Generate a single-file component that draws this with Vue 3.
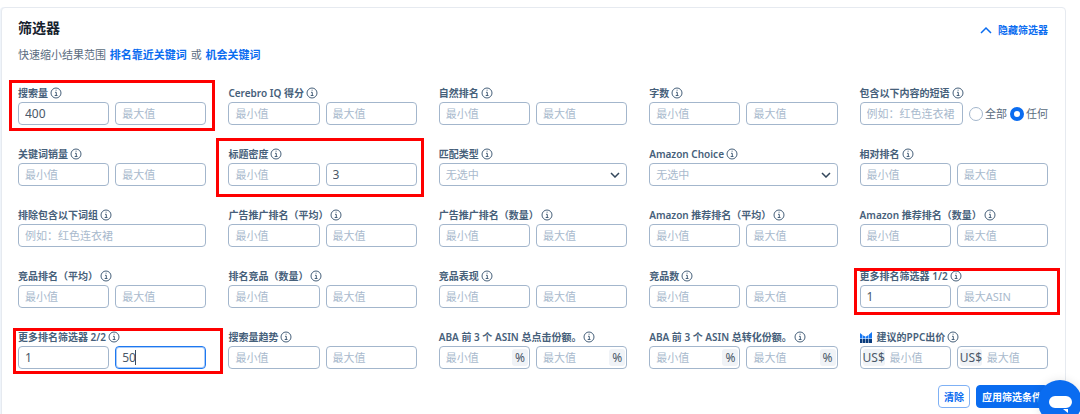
<template>
  <main class="panel">
    <header class="panel-head">
      <div>
        <h1 class="title">筛选器</h1>
        <p class="subtitle">
          快速缩小结果范围
          <a href="#" class="link">排名靠近关键词</a>
          或
          <a href="#" class="link">机会关键词</a>
        </p>
      </div>
      <button type="button" class="toggle">
        <svg viewBox="0 0 12 8" class="toggle-icon"><path d="M1 7 6 2l5 5" /></svg>
        隐藏筛选器
      </button>
    </header>

    <form class="filters" @submit.prevent>
      <div v-for="field in fields" :key="field.id" class="field" role="group" :aria-labelledby="field.id">
        <label :id="field.id" :for="field.id + '-min'" class="label">
          <svg v-if="field.chart" viewBox="0 0 12 11" class="chart-icon">
            <path class="chart-top" d="M0 1l2.5 2v3.5H0zM3 3.5l2.5 1v2H3zM6 4.5l2.5-1.5v3.5H6zM9 2.5L12 0v6.5H9z" />
            <path class="chart-base" d="M0 7h2.5v4H0zM3 7h2.5v4H3zM6 7h2.5v4H6zM9 7h3v4H9z" />
          </svg>
          <span>{{ field.label }}</span>
          <svg viewBox="0 0 12 12" class="info">
            <circle cx="6" cy="6" r="5" />
            <path d="M5 5.3h1.3v3M4.7 8.5h2.8" />
            <path d="M5.6 3.2h1" />
          </svg>
        </label>

        <div v-if="field.type === 'select'" class="controls">
          <div class="select-wrap">
            <select :id="field.id + '-min'" class="box">
              <option>无选中</option>
            </select>
            <svg viewBox="0 0 10 6" class="arrow"><path d="M1 1l4 4 4-4" /></svg>
          </div>
        </div>

        <div v-else-if="field.type === 'text'" class="controls">
          <input :id="field.id + '-min'" type="text" class="box" placeholder="例如：红色连衣裙">
          <div v-if="field.radios" class="radios">
            <label class="radio"><input v-model="match" type="radio" name="match" value="all">全部</label>
            <label class="radio"><input v-model="match" type="radio" name="match" value="any">任何</label>
          </div>
        </div>

        <div v-else class="controls">
          <div class="box-wrap" :class="{ prefixed: field.prefix }">
            <span v-if="field.prefix" class="prefix">{{ field.prefix }}</span>
            <input :id="field.id + '-min'" v-model="field.min" type="text" class="box" placeholder="最小值">
            <span v-if="field.suffix" class="suffix">{{ field.suffix }}</span>
          </div>
          <div class="box-wrap" :class="{ prefixed: field.prefix }">
            <span v-if="field.prefix" class="prefix">{{ field.prefix }}</span>
            <input
              v-model="field.max"
              type="text"
              class="box"
              :class="{ active: field.active }"
              :aria-label="field.label + ' 最大值'"
              :placeholder="field.maxHint || '最大值'"
            >
            <span v-if="field.suffix" class="suffix">{{ field.suffix }}</span>
            <span v-if="field.active" class="caret"></span>
          </div>
        </div>

        <div v-if="field.mark" class="mark" :class="field.mark"></div>
      </div>
    </form>

    <footer class="actions">
      <button type="button" class="btn btn-outline">清除</button>
      <button type="button" class="btn btn-primary">应用筛选条件</button>
    </footer>

    <button type="button" class="chat" aria-label="chat">
      <svg viewBox="0 0 44 44">
        <path d="M17 16h11a6 6 0 0 1 0 12H17a6 6 0 0 1 0-12zM25 29h5v4z" />
      </svg>
    </button>
  </main>
</template>

<script setup>
  import { reactive, ref } from 'vue';

  const match = ref('any');

  const fields = reactive([
    { id: 'volume', label: '搜索量', min: '400', max: '', mark: 'mark-volume' },
    { id: 'cerebro', label: 'Cerebro IQ 得分', min: '', max: '' },
    { id: 'organic', label: '自然排名', min: '', max: '' },
    { id: 'words', label: '字数', min: '', max: '' },
    { id: 'include', label: '包含以下内容的短语', type: 'text', radios: true },
    { id: 'sales', label: '关键词销量', min: '', max: '' },
    { id: 'density', label: '标题密度', min: '', max: '3', mark: 'mark-density' },
    { id: 'match-type', label: '匹配类型', type: 'select' },
    { id: 'choice', label: 'Amazon Choice', type: 'select' },
    { id: 'relative', label: '相对排名', min: '', max: '' },
    { id: 'exclude', label: '排除包含以下词组', type: 'text' },
    { id: 'ad-avg', label: '广告推广排名（平均）', min: '', max: '' },
    { id: 'ad-count', label: '广告推广排名（数量）', min: '', max: '' },
    { id: 'rec-avg', label: 'Amazon 推荐排名（平均）', min: '', max: '' },
    { id: 'rec-count', label: 'Amazon 推荐排名（数量）', min: '', max: '' },
    { id: 'comp-avg', label: '竞品排名（平均）', min: '', max: '' },
    { id: 'comp-count', label: '排名竞品（数量）', min: '', max: '' },
    { id: 'comp-perf', label: '竞品表现', min: '', max: '' },
    { id: 'comp-total', label: '竞品数', min: '', max: '' },
    { id: 'more-1', label: '更多排名筛选器 1/2', min: '1', max: '', maxHint: '最大ASIN', mark: 'mark-more-1' },
    { id: 'more-2', label: '更多排名筛选器 2/2', min: '1', max: '50', active: true, mark: 'mark-more-2' },
    { id: 'trend', label: '搜索量趋势', min: '', max: '' },
    { id: 'click', label: 'ABA 前 3 个 ASIN 总点击份额。', min: '', max: '', suffix: '%' },
    { id: 'conversion', label: 'ABA 前 3 个 ASIN 总转化份额。', min: '', max: '', suffix: '%' },
    { id: 'ppc', label: '建议的PPC出价', min: '', max: '', prefix: 'US$', chart: true }
  ]);
</script>

<style>
  body {
    background: #fff;
    overflow: hidden;
  }
</style>

<style scoped>
  .panel {
    box-sizing: border-box;
    min-height: 100vh;
    margin: 7px 14px 0 1px;
    padding: 11px 17px 0 16px;
    border: 1px solid #e6eaf0;
    border-radius: 4px;
    background: #fff;
    color: #5a6c80;
    font-family: "Noto Sans", "Noto Sans CJK SC", sans-serif;
    font-size: 11px;
    line-height: 16px;
    box-shadow: -1px 0 0 #eff4fa;
  }

  button,
  input,
  select {
    font: inherit;
  }

  .panel-head {
    display: flex;
    justify-content: space-between;
    align-items: flex-start;
  }

  .title {
    margin: 0;
    color: #17222e;
    font-size: 14px;
    font-weight: 700;
    line-height: 18px;
  }

  .subtitle {
    margin: 10px 0 0;
    word-break: keep-all;
  }

  .link {
    margin: 0 1px;
    color: #0a6cf0;
    font-weight: 700;
    text-decoration: none;
  }

  .toggle {
    display: flex;
    align-items: center;
    gap: 6px;
    margin-top: 3px;
    padding: 0;
    border: 0;
    background: none;
    color: #0a6cf0;
    font-size: 10px;
    font-weight: 700;
    cursor: pointer;
  }

  .toggle-icon {
    width: 12px;
    height: 8px;
    fill: none;
    stroke: #0a6cf0;
    stroke-width: 1.5;
  }

  .filters {
    display: grid;
    grid-template-columns: repeat(5, minmax(0, 1fr));
    gap: 21px 22px;
    margin-top: 22px;
  }

  .field {
    position: relative;
  }

  .label {
    display: flex;
    align-items: center;
    gap: 2px;
    height: 16px;
    margin-bottom: 1px;
    color: #46607a;
    font-size: 10px;
    font-weight: 600;
    line-height: 16px;
    white-space: nowrap;
  }

  .info {
    width: 12px;
    height: 12px;
    fill: none;
    stroke: #46607a;
    stroke-width: 1;
  }

  .chart-icon {
    width: 12px;
    height: 11px;
    margin-right: 3px;
  }

  .chart-top {
    fill: #1677f2;
  }

  .chart-base {
    fill: #0b3c7d;
  }

  .controls {
    display: flex;
    gap: 6px;
  }

  .box-wrap,
  .select-wrap {
    position: relative;
    flex: 1;
    min-width: 0;
  }

  .box {
    display: block;
    box-sizing: border-box;
    width: 100%;
    min-width: 0;
    height: 23px;
    padding: 0 6px;
    border: 1px solid #a3b6cc;
    border-radius: 4px;
    outline: 0;
    background: #fff;
    color: #4a5868;
    font-size: 12px;
    appearance: none;
  }

  .box::placeholder,
  select.box {
    color: #a9bacd;
    font-size: 11px;
    opacity: 1;
  }

  .box.active {
    border-color: #1e78f0;
    box-shadow: inset 0 0 0 1px #a9cbf8;
  }

  .prefixed .box {
    padding-left: 29px;
  }

  .prefix,
  .suffix {
    position: absolute;
    top: 3px;
    padding: 0 3px;
    border-radius: 3px;
    background: #f0f3f7;
    color: #4a5868;
    font-size: 12px;
    line-height: 17px;
  }

  .prefix {
    left: 3px;
    padding: 0;
  }

  .suffix {
    right: 2px;
  }

  .caret {
    position: absolute;
    top: 4px;
    left: 20px;
    width: 1px;
    height: 15px;
    background: #3c4b5c;
  }

  .arrow {
    position: absolute;
    top: 9px;
    right: 7px;
    width: 10px;
    height: 6px;
    fill: none;
    stroke: #33475b;
    stroke-width: 1.5;
    pointer-events: none;
  }

  .radios {
    display: flex;
    gap: 3px;
  }

  .radio {
    display: flex;
    align-items: center;
    gap: 2px;
    white-space: nowrap;
  }

  .radio input {
    box-sizing: border-box;
    width: 14px;
    height: 14px;
    margin: 0;
    border: 1px solid #a3b6cc;
    border-radius: 50%;
    background: #fff;
    appearance: none;
  }

  .radio input:checked {
    border: 4px solid #0a6cf0;
  }

  .mark {
    position: absolute;
    border: 3px solid #fe0000;
    pointer-events: none;
  }

  .mark-volume {
    inset: -5px -9px -6px -9px;
  }

  .mark-density {
    inset: -8px -7px -11px -12px;
  }

  .mark-more-1 {
    inset: 0 -12px -7px -6px;
  }

  .mark-more-2 {
    inset: -1px -17px -5px -5px;
  }

  .actions {
    display: flex;
    justify-content: flex-end;
    gap: 6px;
    margin-top: 16px;
  }

  .btn {
    height: 23px;
    padding: 0 5px;
    border: 1px solid #0a6cf0;
    border-radius: 4px;
    font-size: 10px;
    font-weight: 700;
    cursor: pointer;
  }

  .btn-outline {
    border-color: #7fb1f5;
    background: #fff;
    color: #0a6cf0;
  }

  .btn-primary {
    background: #0a6cf0;
    color: #fff;
  }

  .chat {
    position: fixed;
    right: -2px;
    bottom: -10px;
    width: 44px;
    height: 44px;
    padding: 0;
    border: 0;
    border-radius: 50%;
    background: #0a6cf0;
    box-shadow: 0 0 10px rgba(0, 0, 0, 0.1);
    cursor: pointer;
  }

  .chat svg {
    display: block;
    width: 44px;
    height: 44px;
    fill: #fff;
  }
</style>
